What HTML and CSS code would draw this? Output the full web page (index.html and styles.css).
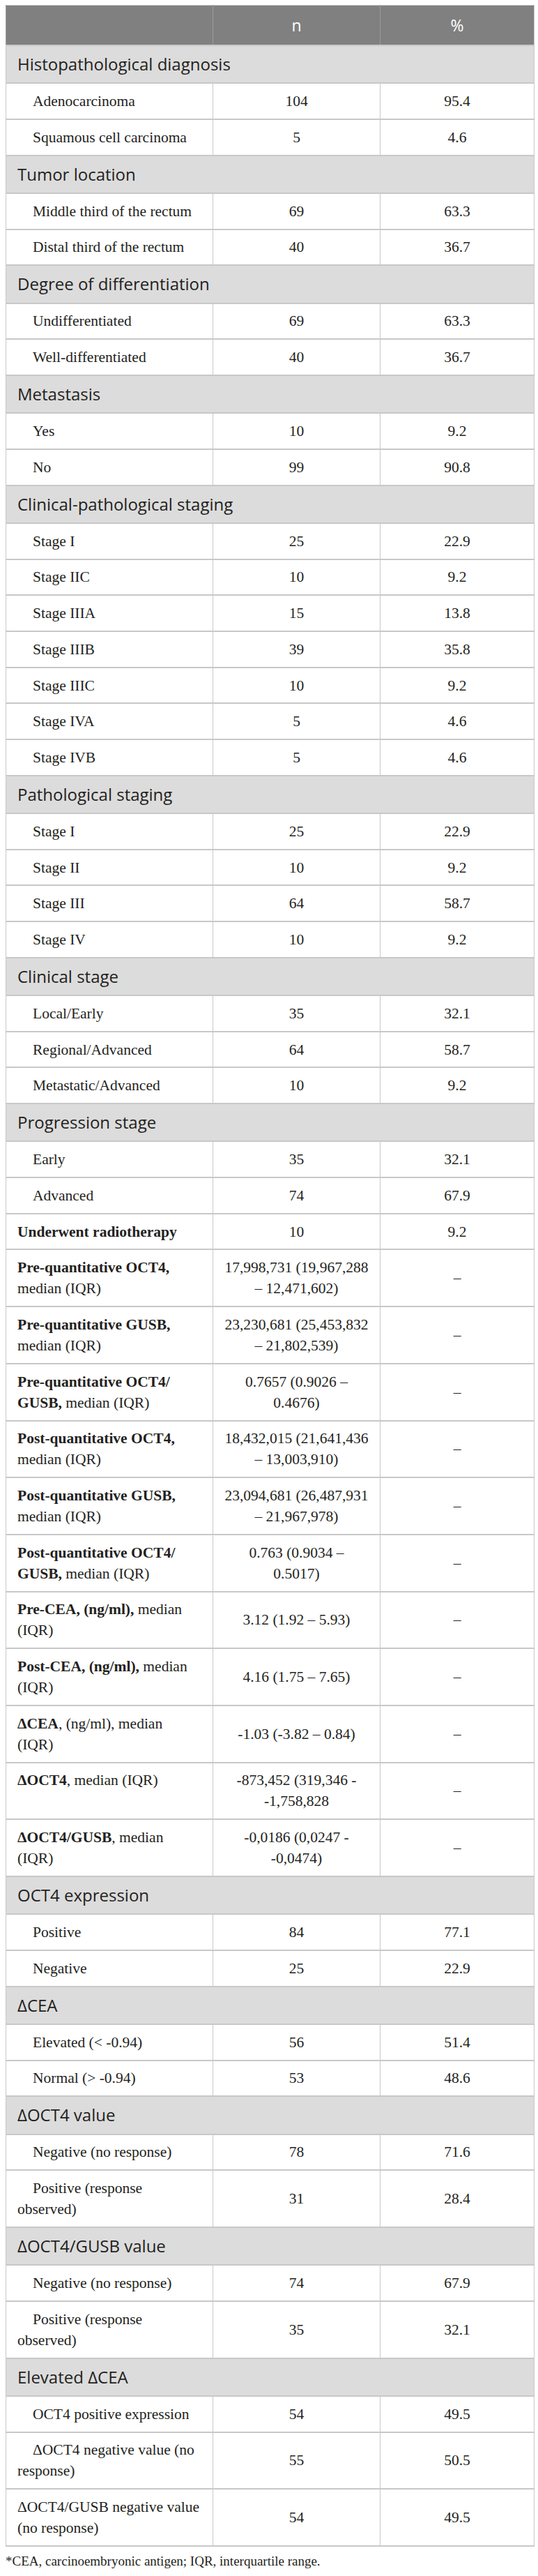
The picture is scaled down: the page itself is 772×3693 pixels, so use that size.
FILE: index.html
```html
<!DOCTYPE html>
<html lang="en">
<head>
  <meta charset="UTF-8">
  <meta name="viewport" content="width=device-width, initial-scale=1.0">
  <title>Patient characteristics</title>
  <link rel="stylesheet" href="styles.css">
</head>
<body>
  <table class="stats">
    <colgroup>
      <col class="col-label">
      <col class="col-n">
      <col class="col-pct">
    </colgroup>
    <thead>
      <tr>
        <th></th>
        <th>n</th>
        <th>%</th>
      </tr>
    </thead>
    <tbody>
      <tr class="section"><td colspan="3">Histopathological diagnosis</td></tr>
      <tr><td class="label indent">Adenocarcinoma</td><td>104</td><td>95.4</td></tr>
      <tr><td class="label indent">Squamous cell carcinoma</td><td>5</td><td>4.6</td></tr>

      <tr class="section"><td colspan="3">Tumor location</td></tr>
      <tr><td class="label indent">Middle third of the rectum</td><td>69</td><td>63.3</td></tr>
      <tr><td class="label indent">Distal third of the rectum</td><td>40</td><td>36.7</td></tr>

      <tr class="section"><td colspan="3">Degree of differentiation</td></tr>
      <tr><td class="label indent">Undifferentiated</td><td>69</td><td>63.3</td></tr>
      <tr><td class="label indent">Well-differentiated</td><td>40</td><td>36.7</td></tr>

      <tr class="section"><td colspan="3">Metastasis</td></tr>
      <tr><td class="label indent">Yes</td><td>10</td><td>9.2</td></tr>
      <tr><td class="label indent">No</td><td>99</td><td>90.8</td></tr>

      <tr class="section"><td colspan="3">Clinical-pathological staging</td></tr>
      <tr><td class="label indent">Stage I</td><td>25</td><td>22.9</td></tr>
      <tr><td class="label indent">Stage IIC</td><td>10</td><td>9.2</td></tr>
      <tr><td class="label indent">Stage IIIA</td><td>15</td><td>13.8</td></tr>
      <tr><td class="label indent">Stage IIIB</td><td>39</td><td>35.8</td></tr>
      <tr><td class="label indent">Stage IIIC</td><td>10</td><td>9.2</td></tr>
      <tr><td class="label indent">Stage IVA</td><td>5</td><td>4.6</td></tr>
      <tr><td class="label indent">Stage IVB</td><td>5</td><td>4.6</td></tr>

      <tr class="section"><td colspan="3">Pathological staging</td></tr>
      <tr><td class="label indent">Stage I</td><td>25</td><td>22.9</td></tr>
      <tr><td class="label indent">Stage II</td><td>10</td><td>9.2</td></tr>
      <tr><td class="label indent">Stage III</td><td>64</td><td>58.7</td></tr>
      <tr><td class="label indent">Stage IV</td><td>10</td><td>9.2</td></tr>

      <tr class="section"><td colspan="3">Clinical stage</td></tr>
      <tr><td class="label indent">Local/Early</td><td>35</td><td>32.1</td></tr>
      <tr><td class="label indent">Regional/Advanced</td><td>64</td><td>58.7</td></tr>
      <tr><td class="label indent">Metastatic/Advanced</td><td>10</td><td>9.2</td></tr>

      <tr class="section"><td colspan="3">Progression stage</td></tr>
      <tr><td class="label indent">Early</td><td>35</td><td>32.1</td></tr>
      <tr><td class="label indent">Advanced</td><td>74</td><td>67.9</td></tr>

      <tr><td class="label"><b>Underwent radiotherapy</b></td><td>10</td><td>9.2</td></tr>
      <tr><td class="label"><b>Pre-quantitative OCT4,</b><br>median (IQR)</td><td>17,998,731 (19,967,288<br>– 12,471,602)</td><td>–</td></tr>
      <tr><td class="label"><b>Pre-quantitative GUSB,</b><br>median (IQR)</td><td>23,230,681 (25,453,832<br>– 21,802,539)</td><td>–</td></tr>
      <tr><td class="label"><b>Pre-quantitative OCT4/<br>GUSB,</b> median (IQR)</td><td>0.7657 (0.9026 –<br>0.4676)</td><td>–</td></tr>
      <tr><td class="label"><b>Post-quantitative OCT4,</b><br>median (IQR)</td><td>18,432,015 (21,641,436<br>– 13,003,910)</td><td>–</td></tr>
      <tr><td class="label"><b>Post-quantitative GUSB,</b><br>median (IQR)</td><td>23,094,681 (26,487,931<br>– 21,967,978)</td><td>–</td></tr>
      <tr><td class="label"><b>Post-quantitative OCT4/<br>GUSB,</b> median (IQR)</td><td>0.763 (0.9034 –<br>0.5017)</td><td>–</td></tr>
      <tr><td class="label"><b>Pre-CEA, (ng/ml),</b> median<br>(IQR)</td><td>3.12 (1.92 – 5.93)</td><td>–</td></tr>
      <tr><td class="label"><b>Post-CEA, (ng/ml),</b> median<br>(IQR)</td><td>4.16 (1.75 – 7.65)</td><td>–</td></tr>
      <tr><td class="label"><b>ΔCEA</b>, (ng/ml), median<br>(IQR)</td><td>-1.03 (-3.82 – 0.84)</td><td>–</td></tr>
      <tr><td class="label"><b>ΔOCT4</b>, median (IQR)</td><td>-873,452 (319,346 -<br>-1,758,828</td><td>–</td></tr>
      <tr><td class="label"><b>ΔOCT4/GUSB</b>, median<br>(IQR)</td><td>-0,0186 (0,0247 -<br>-0,0474)</td><td>–</td></tr>

      <tr class="section"><td colspan="3">OCT4 expression</td></tr>
      <tr><td class="label indent">Positive</td><td>84</td><td>77.1</td></tr>
      <tr><td class="label indent">Negative</td><td>25</td><td>22.9</td></tr>

      <tr class="section"><td colspan="3">ΔCEA</td></tr>
      <tr><td class="label indent">Elevated (&lt; -0.94)</td><td>56</td><td>51.4</td></tr>
      <tr><td class="label indent">Normal (&gt; -0.94)</td><td>53</td><td>48.6</td></tr>

      <tr class="section"><td colspan="3">ΔOCT4 value</td></tr>
      <tr><td class="label indent">Negative (no response)</td><td>78</td><td>71.6</td></tr>
      <tr><td class="label indent">Positive (response<br>observed)</td><td>31</td><td>28.4</td></tr>

      <tr class="section"><td colspan="3">ΔOCT4/GUSB value</td></tr>
      <tr><td class="label indent">Negative (no response)</td><td>74</td><td>67.9</td></tr>
      <tr><td class="label indent">Positive (response<br>observed)</td><td>35</td><td>32.1</td></tr>

      <tr class="section"><td colspan="3">Elevated ΔCEA</td></tr>
      <tr><td class="label indent">OCT4 positive expression</td><td>54</td><td>49.5</td></tr>
      <tr><td class="label indent">ΔOCT4 negative value (no<br>response)</td><td>55</td><td>50.5</td></tr>
      <tr><td class="label">ΔOCT4/GUSB negative value<br>(no response)</td><td>54</td><td>49.5</td></tr>
    </tbody>
  </table>
  <p class="note">*CEA, carcinoembryonic antigen; IQR, interquartile range.</p>
</body>
</html>
```

FILE: styles.css
```css
body {
  margin: 0;
  padding: 7px 5px 0 8px;
  font-family: "Liberation Serif", "Times New Roman", serif;
  color: #231f20;
  background: #ffffff;
}
.stats {
  width: 100%;
  border-collapse: collapse;
  border: 1px solid #c8c8c8;
  font-size: 21.5px;
  line-height: 30px;
}
.col-label {
  width: 297px;
}
.col-n {
  width: 240px;
}
.stats th {
  height: 56px;
  padding: 0;
  background: #808080;
  color: #ffffff;
  font-family: "Open Sans", sans-serif;
  font-size: 23px;
  font-weight: normal;
  border-left: 1px solid #9a9a9a;
}
.stats td {
  padding: 9.85px 12px;
  border-style: solid;
  border-color: #c8c8c8;
  border-width: 2px 1px;
  text-align: center;
  vertical-align: middle;
}
.stats td.label {
  padding: 9.85px 14px 9.85px 16px;
  text-align: left;
  vertical-align: top;
}
.indent {
  text-indent: 22px;
}
.section td {
  padding: 11.15px 16px;
  background: #dcdcdc;
  font-family: "Open Sans", sans-serif;
  font-size: 24px;
  text-align: left;
}
.note {
  margin: 8px 0 0;
  font-size: 19px;
  line-height: 26px;
}
```
